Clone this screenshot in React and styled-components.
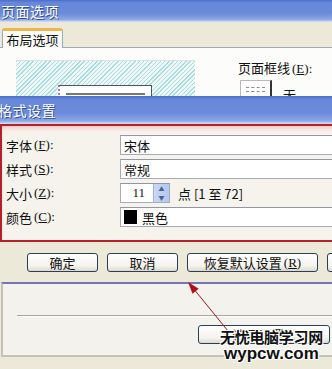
import { Fragment } from 'react';
import styled, { createGlobalStyle } from 'styled-components';

const GlobalStyle = createGlobalStyle`
  html, body { margin: 0; padding: 0; background: #ece9d8; }
  body { font-family: "Noto Sans CJK SC", "Noto Sans", sans-serif; }
`;

const Screen = styled.div`
  position: relative;
  width: 332px;
  height: 369px;
  overflow: hidden;
  background: #ece9d8;
  font-size: 13px;
  color: #111;
`;

const TitleBar = styled.div`
  height: ${(p) => p.$h}px;
  display: flex;
  align-items: center;
  padding-left: ${(p) => p.$indent}px;
  box-sizing: border-box;
  background: linear-gradient(#4c6dcb 0, #6787d8 12%, #6b8bd9 60%, #8ba6e6 88%, #d9e1f3 100%);
  color: #fff;
  font-size: 14px;
  letter-spacing: 0.5px;
  text-shadow: 1px 1px 0 #34508f;
  white-space: nowrap;
`;

const TabStrip = styled.div`
  height: 26px;
  box-sizing: border-box;
  display: flex;
  align-items: flex-end;
  padding-left: 2px;
  border-bottom: 1px solid #9aabb6;
`;

const Tab = styled.div`
  width: 61px;
  height: 20px;
  margin-bottom: -1px;
  box-sizing: border-box;
  display: flex;
  align-items: center;
  justify-content: center;
  background: #fcfcfa;
  border: 1px solid #9aabb6;
  border-bottom: none;
  border-top: 3px solid #eeb54a;
  border-radius: 3px 3px 0 0;
`;

const TabPanel = styled.div`
  height: 48px;
  display: flex;
  padding: 12px 0 0 16px;
  box-sizing: border-box;
  background: #fcfcfa;
  overflow: hidden;
`;

const Hatch = styled.div`
  width: 179px;
  height: 60px;
  flex-shrink: 0;
  box-sizing: border-box;
  padding: 24px 0 0 42px;
  border-top: 1px solid #d6e4e6;
  background: repeating-linear-gradient(135deg, #a9dcdc 0 1px, #eef8f8 1px 3px);
`;

const PageSheet = styled.div`
  width: 94px;
  height: 30px;
  box-sizing: border-box;
  padding: 7px 6px 0 6px;
  background: #fff;
  border: 1px solid #555;
  border-left: 2px dotted #9a7ab8;
`;

const SheetBar = styled.div`
  height: 2px;
  background: #777;
`;

const BorderCol = styled.div`
  display: flex;
  flex-direction: column;
  margin-left: 43px;
  margin-top: -2px;
  gap: 3px;
`;

const BorderRow = styled.div`
  display: flex;
  align-items: flex-end;
  gap: 11px;
  margin-left: 2px;
`;

const BorderSwatch = styled.div`
  width: 32px;
  height: 24px;
  box-sizing: border-box;
  padding: 6px 5px 0;
  display: flex;
  flex-direction: column;
  gap: 3px;
  background: #fff;
  border: 1px solid #b8b8b8;
  border-right: 2px solid #333;
`;

const SwatchLine = styled.div`
  border-top: 1px dashed #8a8a8a;
`;

const RedBox = styled.div`
  width: 340px;
  box-sizing: border-box;
  border: 2px solid #b3222c;
  border-right: none;
  box-shadow: inset 0 4px 4px -2px #f1c2b8;
  background: #f5f3ec;
  padding: 9px 0 13px 2px;
`;

const FormGrid = styled.div`
  display: grid;
  grid-template-columns: 116px 1fr;
  grid-auto-rows: 20px;
  row-gap: 4px;
`;

const Key = styled.span`
  margin-left: 2px;
  font-family: "Liberation Serif", serif;
  u { text-underline-offset: 1px; }
`;

const Label = styled.div`
  display: flex;
  align-items: center;
  padding-left: 2px;
  white-space: nowrap;
`;

const Field = styled.div`
  display: flex;
  align-items: center;
  box-sizing: border-box;
  height: 20px;
  width: ${(p) => (p.$w ? `${p.$w}px` : 'auto')};
  padding-left: 3px;
  gap: 5px;
  background: #fff;
  border: 1px solid #a4acb6;
  border-top-color: #8f98a4;
`;

const SpinRow = styled.div`
  display: flex;
  align-items: center;
  gap: 8px;
  white-space: nowrap;
`;

const SpinValue = styled.span`
  flex: 1;
  text-align: right;
  padding-right: 3px;
  font-family: "Liberation Serif", serif;
`;

const Spinner = styled.div`
  width: 15px;
  height: 18px;
  display: flex;
  flex-direction: column;
  background: linear-gradient(90deg, #c9d8f6, #b3c7f0);
  border-left: 1px solid #9fb4e2;
`;

const SpinHalf = styled.div`
  flex: 1;
  display: flex;
  align-items: center;
  justify-content: center;
  color: #4d6185;
  font-size: 6px;
  line-height: 1;
`;

const Swatch = styled.div`
  width: 13px;
  height: 14px;
  background: #000;
`;

const ButtonRow = styled.div`
  height: 40px;
  display: flex;
  gap: 9px;
  padding: 11px 0 0 27px;
  box-sizing: border-box;
`;

const Button = styled.div`
  width: ${(p) => p.$w}px;
  flex-shrink: 0;
  height: 19px;
  box-sizing: border-box;
  display: flex;
  align-items: center;
  justify-content: center;
  border: 1px solid #2a3e58;
  border-radius: 3px;
  background: linear-gradient(#ffffff, #f4f3ee 70%, #dcd8cc);
  white-space: nowrap;
`;

const BottomPanel = styled.div`
  height: 75px;
  box-sizing: border-box;
  border-top: 2px solid #7477b3;
  border-left: 2px solid #c4c2b8;
  border-bottom: 2px solid #c4c2b8;
  margin-left: 1px;
  background: #f3f2ed;
  padding: 31px 0 0 14px;
`;

const Divider = styled.div`
  height: 1px;
  border-bottom: 1px solid #fff;
  background: #a9a79e;
`;

const BottomButtonRow = styled.div`
  display: flex;
  margin: 8px 0 0 181px;
`;

const Arrow = styled.svg`
  position: absolute;
  left: 0;
  top: 0;
  pointer-events: none;
`;

const Watermark = styled.div`
  position: absolute;
  left: 220px;
  top: 329px;
  display: flex;
  flex-direction: column;
  align-items: center;
  font-weight: bold;
  color: #111;
  text-shadow: 1px 1px 0 #fff, -1px -1px 0 #fff, 1px -1px 0 #fff, -1px 1px 0 #fff, 0 0 2px #fff;
  line-height: 1;
`;

const MarkCn = styled.span`
  font-size: 15px;
  letter-spacing: -0.3px;
`;

const MarkEn = styled.span`
  font-family: "Liberation Sans", Arial, sans-serif;
  font-size: 17px;
  margin-top: 1px;
`;

const rows = [
  { label: '字体', key: 'F', value: '宋体' },
  { label: '样式', key: 'S', value: '常规' },
];

const Mnemonic = ({ k }) => (
  <Key>
    (<u>{k}</u>):
  </Key>
);

export default function App() {
  return (
    <Screen>
      <GlobalStyle />
      <TitleBar $h={22} $indent={1}>页面选项</TitleBar>
      <TabStrip>
        <Tab>布局选项</Tab>
      </TabStrip>
      <TabPanel>
        <Hatch>
          <PageSheet>
            <SheetBar />
          </PageSheet>
        </Hatch>
        <BorderCol>
          <span>
            页面框线<Mnemonic k="E" />
          </span>
          <BorderRow>
            <BorderSwatch>
              <SwatchLine />
              <SwatchLine />
            </BorderSwatch>
            <span>无</span>
          </BorderRow>
        </BorderCol>
      </TabPanel>
      <TitleBar $h={28} $indent={0}>
        <span style={{ marginLeft: -2 }}>格式设置</span>
      </TitleBar>
      <RedBox>
        <FormGrid>
          {rows.map((r) => (
            <Fragment key={r.label}>
              <Label>
                {r.label}
                <Mnemonic k={r.key} />
              </Label>
              <Field>{r.value}</Field>
            </Fragment>
          ))}
          <Label>
            大小<Mnemonic k="Z" />
          </Label>
          <SpinRow>
            <Field $w={50}>
              <SpinValue>11</SpinValue>
              <Spinner>
                <SpinHalf>▲</SpinHalf>
                <SpinHalf>▼</SpinHalf>
              </Spinner>
            </Field>
            <span>点 [1 至 72]</span>
          </SpinRow>
          <Label>
            颜色<Mnemonic k="C" />
          </Label>
          <Field>
            <Swatch />
            黑色
          </Field>
        </FormGrid>
      </RedBox>
      <ButtonRow>
        <Button $w={71}>确定</Button>
        <Button $w={71}>取消</Button>
        <Button $w={131}>
          恢复默认设置<Key>(<u>R</u>)</Key>
        </Button>
        <Button $w={60}>帮助</Button>
      </ButtonRow>
      <BottomPanel>
        <Divider />
        <BottomButtonRow>
          <Button $w={132}>选项设置...</Button>
        </BottomButtonRow>
      </BottomPanel>
      <Arrow width="332" height="369" viewBox="0 0 332 369">
        <line x1="228" y1="331" x2="193" y2="288" stroke="#8e1a1a" strokeWidth="1" />
        <polygon points="188,282 198.7,288.8 192.5,293.8" fill="#b0101a" />
      </Arrow>
      <Watermark>
        <MarkCn>无忧电脑学习网</MarkCn>
        <MarkEn>wypcw.com</MarkEn>
      </Watermark>
    </Screen>
  );
}
